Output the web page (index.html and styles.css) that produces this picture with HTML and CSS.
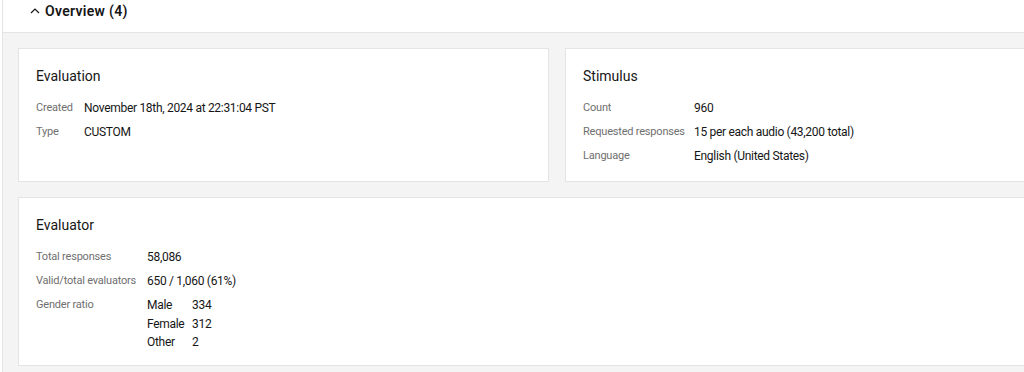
FILE: index.html
```html
<!DOCTYPE html>
<html lang="en">
<head>
    <meta charset="UTF-8">
    <meta name="viewport" content="width=device-width, initial-scale=1.0">
    <title>Overview</title>
    <link rel="stylesheet" href="styles.css">
</head>
<body>
    <div class="panel">
        <div class="panel-header">
            <svg class="chevron" width="10" height="8" viewBox="0 0 10 8">
                <path d="M1 6 L5 2 L9 6" fill="none" stroke="#161616" stroke-width="1.2"/>
            </svg>
            <span>Overview (4)</span>
        </div>

        <div class="panel-body">
            <div class="card">
                <h3>Evaluation</h3>
                <dl class="details labels-sm">
                    <dt>Created</dt>
                    <dd>November 18th, 2024 at 22:31:04 PST</dd>
                    <dt>Type</dt>
                    <dd>CUSTOM</dd>
                </dl>
            </div>

            <div class="card">
                <h3>Stimulus</h3>
                <dl class="details labels-lg">
                    <dt>Count</dt>
                    <dd>960</dd>
                    <dt>Requested responses</dt>
                    <dd>15 per each audio (43,200 total)</dd>
                    <dt>Language</dt>
                    <dd>English (United States)</dd>
                </dl>
            </div>

            <div class="card wide">
                <h3>Evaluator</h3>
                <dl class="details labels-lg">
                    <dt>Total responses</dt>
                    <dd>58,086</dd>
                    <dt>Valid/total evaluators</dt>
                    <dd>650 / 1,060 (61%)</dd>
                    <dt>Gender ratio</dt>
                    <dd>
                        <dl class="ratio">
                            <dt>Male</dt>
                            <dd>334</dd>
                            <dt>Female</dt>
                            <dd>312</dd>
                            <dt>Other</dt>
                            <dd>2</dd>
                        </dl>
                    </dd>
                </dl>
            </div>
        </div>
    </div>
</body>
</html>
```

FILE: styles.css
```css
body {
    margin: 0;
    font-family: Roboto, "Liberation Sans", sans-serif;
    color: #161616;
    background: #ffffff;
    overflow: hidden;
}
.panel {
    margin-left: 2px;
    width: 1120px;
    border-left: 1px solid #e4e4e4;
}
.panel-header {
    display: flex;
    align-items: flex-start;
    gap: 5px;
    height: 33px;
    padding: 2px 0 0 27px;
    box-sizing: border-box;
    border-bottom: 1px solid #e4e4e4;
    font-size: 14px;
    font-weight: 600;
    line-height: 18px;
    letter-spacing: 0.3px;
}
.chevron {
    margin-top: 5px;
}
.panel-body {
    display: grid;
    grid-template-columns: 531px 531px;
    gap: 15px 16px;
    padding: 15px 15px 20px;
    background: #f4f4f4;
}
.card {
    background: #ffffff;
    border: 1px solid #e4e4e4;
    padding: 18px 17px 13px;
}
.card.wide {
    grid-column: 1 / -1;
}
.card h3 {
    margin: 0 0 11px;
    font-size: 14px;
    font-weight: 400;
    line-height: 18px;
}
.details {
    display: grid;
    grid-template-columns: max-content 1fr;
    column-gap: 12px;
    margin: 0;
    font-size: 12px;
    line-height: 24px;
    letter-spacing: -0.3px;
}
.details.labels-sm {
    grid-template-columns: 36px 1fr;
}
.details.labels-lg {
    grid-template-columns: 99px 1fr;
}
.details dt {
    color: #6f6f6f;
    font-size: 11px;
    letter-spacing: -0.2px;
    white-space: nowrap;
}
.details dd {
    margin: 0;
}
.ratio {
    display: grid;
    grid-template-columns: 33px max-content;
    column-gap: 12px;
    margin: 3px 0 0;
    line-height: 18.5px;
}
.ratio dt {
    color: #161616;
    font-size: 12px;
    letter-spacing: -0.3px;
}
```
